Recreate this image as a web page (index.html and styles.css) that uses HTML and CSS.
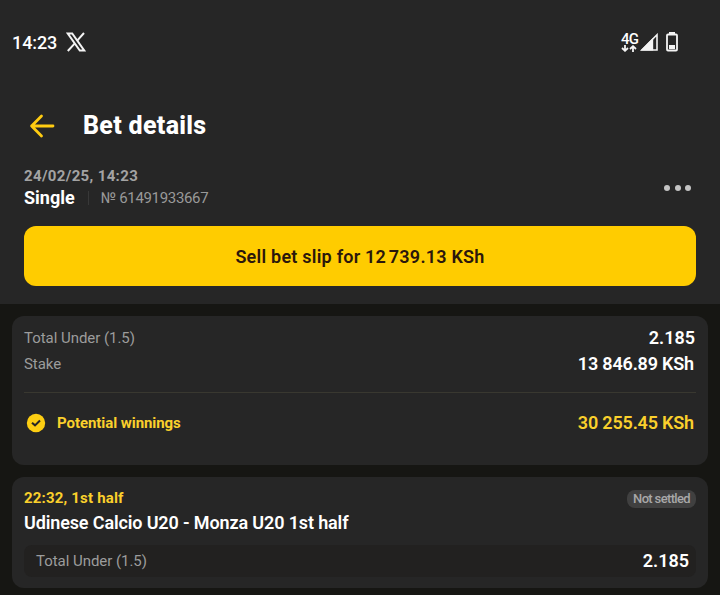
FILE: index.html
```html
<!DOCTYPE html>
<html lang="en">
<head>
    <meta charset="UTF-8">
    <meta name="viewport" content="width=device-width, initial-scale=1.0">
    <title>Bet details</title>
    <link rel="stylesheet" href="styles.css">
</head>
<body>

    <header class="header">
        <!-- Status bar -->
        <div class="status-bar">
            <span class="clock">14:23</span>
            <svg class="x-icon" width="20" height="20" viewBox="0 0 20 20" fill="none" stroke="#f4f4f4">
                <path d="M1.6 1.4H6.2L18.4 18.6H13.8Z" stroke-width="2"/>
                <path d="M18 1L11.2 8.7M8.6 11.6L1.8 19" stroke-width="2"/>
            </svg>
            <div class="status-icons">
                <div class="network">
                    <span class="network-type">4G</span>
                    <svg width="16" height="7" viewBox="0 0 16 7" fill="none" stroke="#f4f4f4" stroke-width="1.8">
                        <path d="M4 0V5.5M1 3L4 5.8L7 3M12 7V1.5M9 4L12 1.2L15 4"/>
                    </svg>
                </div>
                <svg class="signal" width="18" height="18" viewBox="0 0 18 18">
                    <path d="M17 1.8V17H1.8Z" fill="none" stroke="#f4f4f4" stroke-width="1.6"/>
                    <path d="M0.5 17.5L13.2 4.8V17.5Z" fill="#f4f4f4"/>
                </svg>
                <svg width="12" height="20" viewBox="0 0 12 20">
                    <path d="M3 0H9V2H3Z" fill="#f4f4f4"/>
                    <rect x="1" y="2.5" width="10" height="16" rx="1" fill="none" stroke="#f4f4f4" stroke-width="1.8"/>
                    <path d="M3 13H9V17H3Z" fill="#f4f4f4"/>
                </svg>
            </div>
        </div>

        <div class="title-bar">
            <svg width="26" height="24" viewBox="0 0 26 24" fill="none" stroke="#fc1" stroke-width="2.8" stroke-linecap="round" stroke-linejoin="round">
                <path d="M24 12H2.6M12.5 2L2.6 12L12.5 22"/>
            </svg>
            <h1>Bet details</h1>
        </div>

        <!-- Bet summary -->
        <div class="bet-info">
            <div>
                <div class="bet-date">24/02/25, 14:23</div>
                <div class="bet-meta">
                    <span class="bet-type">Single</span>
                    <span class="bet-number">№ 61491933667</span>
                </div>
            </div>
            <div class="more">
                <span></span>
                <span></span>
                <span></span>
            </div>
        </div>

        <button class="sell-button">Sell bet slip for <span class="sell-amount">12 739.13</span> KSh</button>
    </header>

    <main class="content">
        <section class="card totals">
            <div class="row">
                <span class="label">Total Under (1.5)</span>
                <span class="value odds">2.185</span>
            </div>
            <div class="row">
                <span class="label">Stake</span>
                <span class="value">13 846.89 KSh</span>
            </div>
            <div class="row winnings">
                <svg width="20" height="20" viewBox="0 0 20 20">
                    <circle cx="10" cy="10" r="9.2" fill="#fdce12"/>
                    <path d="M6 9.8L9 12.4L14 7.5" fill="none" stroke="#262626" stroke-width="2.1"/>
                </svg>
                <span class="winnings-label">Potential winnings</span>
                <span class="value">30 255.45 KSh</span>
            </div>
        </section>

        <section class="card event">
            <div class="row event-top">
                <span class="event-time">22:32, 1st half</span>
                <span class="badge">Not settled</span>
            </div>
            <div class="event-name">Udinese Calcio U20 - Monza U20 1st half</div>
            <div class="row market">
                <span class="label">Total Under (1.5)</span>
                <span class="value odds">2.185</span>
            </div>
        </section>
    </main>

</body>
</html>
```
FILE: styles.css
```css
* {
    box-sizing: border-box;
}

body {
    margin: 0;
    height: 595px;
    overflow: hidden;
    background-color: #161613;
    color: #fff;
    font-family: Roboto, sans-serif;
}

svg {
    display: block;
    flex-shrink: 0;
}

.header {
    height: 304px;
    padding-top: 30px;
    background-color: #262626;
}

/* Status bar */
.status-bar {
    display: flex;
    align-items: center;
    height: 24px;
    padding: 0 42px 0 12px;
}

.clock {
    width: 54px;
    padding-top: 1px;
    font-size: 18px;
    font-weight: 500;
    line-height: 25px;
    letter-spacing: -0.1px;
}

.status-icons {
    display: flex;
    align-items: center;
    margin-left: auto;
}

.network {
    width: 19px;
    height: 18px;
}

.network-type {
    display: block;
    font-size: 15px;
    font-weight: 500;
    line-height: 12px;
    letter-spacing: -0.8px;
}

.signal {
    margin-right: 8px;
}

/* Title */
.title-bar {
    display: flex;
    align-items: center;
    height: 40px;
    margin-top: 52px;
    padding-left: 29px;
}

h1 {
    margin: 0 0 0 28px;
    font-size: 25px;
    font-weight: 800;
    line-height: 40px;
    letter-spacing: 0.3px;
}

/* Bet info */
.bet-info {
    display: flex;
    justify-content: space-between;
    margin-top: 19px;
    padding: 0 29px 0 24px;
}

.bet-date {
    color: #a3a3a3;
    font-size: 15px;
    font-weight: 700;
    line-height: 22px;
    letter-spacing: 0.35px;
}

.bet-meta {
    display: flex;
    align-items: center;
    height: 22px;
}

.bet-type {
    padding-bottom: 2px;
    font-size: 18px;
    font-weight: 700;
}

.bet-number {
    margin-left: 13px;
    padding-left: 12px;
    border-left: 1px solid #383838;
    color: #999;
    font-size: 15px;
    line-height: 14px;
    letter-spacing: -0.33px;
}

.more {
    display: flex;
    gap: 4.5px;
    margin-top: 20px;
}

.more span {
    width: 6px;
    height: 6px;
    border-radius: 50%;
    background-color: #c4c4c4;
}

.sell-button {
    display: block;
    width: 672px;
    height: 60px;
    margin: 17px 24px 0;
    padding: 0;
    border: none;
    border-radius: 12px;
    background-color: #fc0;
    color: #2b170c;
    font-family: inherit;
    font-size: 18px;
    font-weight: 600;
    letter-spacing: 0.23px;
}

.sell-amount {
    word-spacing: -2px;
}

/* Cards */
.content {
    display: flex;
    flex-direction: column;
    gap: 12px;
    padding: 12px;
}

.card {
    padding: 0 12px;
    border-radius: 12px;
    background-color: #262626;
}

.row {
    display: flex;
    align-items: center;
    height: 26px;
}

.label {
    color: #9c9c9c;
    font-size: 15px;
    letter-spacing: -0.04px;
}

.value {
    margin-left: auto;
    padding: 0 2px 2px 0;
    font-size: 18px;
    font-weight: 600;
    letter-spacing: -0.18px;
}

.odds {
    padding-right: 1px;
    letter-spacing: 0;
}

.totals {
    height: 149px;
    padding-top: 9px;
}

.winnings {
    height: 61px;
    margin-top: 15px;
    padding-left: 2px;
    border-top: 1px solid #393830;
    color: #fad02c;
}

.winnings-label {
    margin-left: 11px;
    font-size: 15px;
    font-weight: 700;
    letter-spacing: -0.06px;
}

.event {
    height: 111px;
    padding-top: 9px;
}

.event-top {
    justify-content: space-between;
}

.event-time {
    padding-bottom: 2px;
    color: #fad02c;
    font-size: 15px;
    font-weight: 700;
    letter-spacing: 0.18px;
}

.badge {
    height: 18px;
    padding: 0 6px;
    border-radius: 8px;
    background-color: #404040;
    color: #a8a8a8;
    font-size: 13px;
    font-weight: 500;
    line-height: 18px;
    letter-spacing: -0.65px;
}

.event-name {
    font-size: 18px;
    font-weight: 600;
    line-height: 22px;
    letter-spacing: -0.13px;
}

.market {
    height: 32px;
    margin-top: 11px;
    padding: 0 6px 0 12px;
    border-radius: 8px;
    background-color: #222120;
}
```
